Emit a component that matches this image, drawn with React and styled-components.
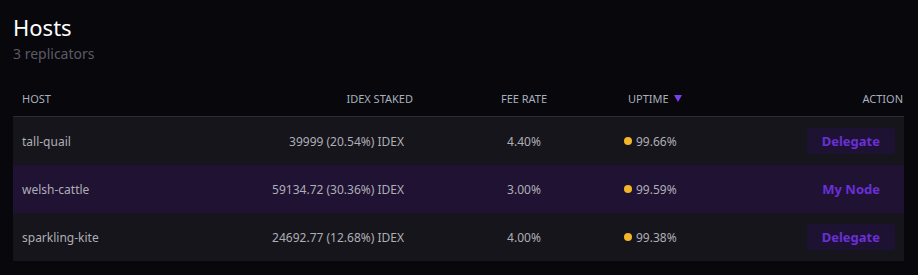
import React from 'react';
import styled, { createGlobalStyle } from 'styled-components';

const GlobalStyle = createGlobalStyle`
  html, body {
    margin: 0;
    padding: 0;
    background: #08070c;
  }
  body {
    font-family: "Noto Sans", "Open Sans", sans-serif;
  }
`;

const Page = styled.div`
  padding: 12px 14px 0 13px;
`;

const Title = styled.h1`
  margin: 0;
  font-size: 22px;
  font-weight: 400;
  line-height: 30px;
  color: #ffffff;
`;

const Subtitle = styled.p`
  margin: 2px 0 0;
  font-size: 14px;
  line-height: 20px;
  color: #5b5b63;
`;

const Table = styled.div`
  margin-top: 16px;
`;

const columns = `228px 163px 211px 1fr auto`;

const HeaderRow = styled.div`
  display: grid;
  grid-template-columns: ${columns};
  align-items: center;
  height: 36px;
  padding: 0 1px 0 9px;
  border-bottom: 1px solid #2b2b31;
  font-size: 11px;
  color: #a7b0bb;
  text-transform: uppercase;
`;

const HeadCell = styled.div`
  display: flex;
  align-items: center;
  gap: 5px;
  justify-content: ${(p) => (p.$align === 'right' ? 'flex-end' : p.$align === 'center' ? 'center' : 'flex-start')};
  padding-left: ${(p) => p.$pl || 0}px;
`;

const SortArrow = styled.span`
  width: 0;
  height: 0;
  border-left: 4px solid transparent;
  border-right: 4px solid transparent;
  border-top: 7px solid #7b3ff2;
`;

const Row = styled.div`
  display: grid;
  grid-template-columns: ${columns};
  align-items: center;
  height: 48px;
  padding: 0 9px;
  background: ${(p) => (p.$mine ? '#1f1233' : '#15151b')};
  font-size: 12px;
  color: #aeaeb6;
`;

const Cell = styled.div`
  display: flex;
  align-items: center;
  justify-content: ${(p) => (p.$align === 'right' ? 'flex-end' : p.$align === 'center' ? 'center' : 'flex-start')};
  padding-left: ${(p) => p.$pl || 0}px;
  padding-right: ${(p) => p.$pr || 0}px;
`;

const Dot = styled.span`
  width: 8px;
  height: 8px;
  border-radius: 50%;
  background: #f3b529;
  margin-right: 4px;
`;

const ActionButton = styled.button`
  font-family: inherit;
  font-size: 13px;
  font-weight: 700;
  color: #6a2fd6;
  background: ${(p) => (p.$plain ? 'transparent' : '#1e1232')};
  border: none;
  border-radius: 2px;
  height: 26px;
  padding: 0 15px;
  cursor: pointer;
`;

const hosts = [
  { name: 'tall-quail', staked: '39999 (20.54%) IDEX', fee: '4.40%', uptime: '99.66%' },
  { name: 'welsh-cattle', staked: '59134.72 (30.36%) IDEX', fee: '3.00%', uptime: '99.59%', mine: true },
  { name: 'sparkling-kite', staked: '24692.77 (12.68%) IDEX', fee: '4.00%', uptime: '99.38%' },
];

export default function App() {
  return (
    <Page>
      <GlobalStyle />
      <Title>Hosts</Title>
      <Subtitle>3 replicators</Subtitle>
      <Table>
        <HeaderRow>
          <HeadCell>Host</HeadCell>
          <HeadCell $align="right">IDEX Staked</HeadCell>
          <HeadCell $align="center" $pl={11}>Fee Rate</HeadCell>
          <HeadCell $pl={4}>
            Uptime <SortArrow />
          </HeadCell>
          <HeadCell $align="right">Action</HeadCell>
        </HeaderRow>
        {hosts.map((h) => (
          <Row key={h.name} $mine={h.mine}>
            <Cell>{h.name}</Cell>
            <Cell $align="right" $pr={9}>{h.staked}</Cell>
            <Cell $align="center" $pl={11}>{h.fee}</Cell>
            <Cell>
              <Dot />
              {h.uptime}
            </Cell>
            <Cell $align="right">
              <ActionButton $plain={h.mine}>{h.mine ? 'My Node' : 'Delegate'}</ActionButton>
            </Cell>
          </Row>
        ))}
      </Table>
    </Page>
  );
}
